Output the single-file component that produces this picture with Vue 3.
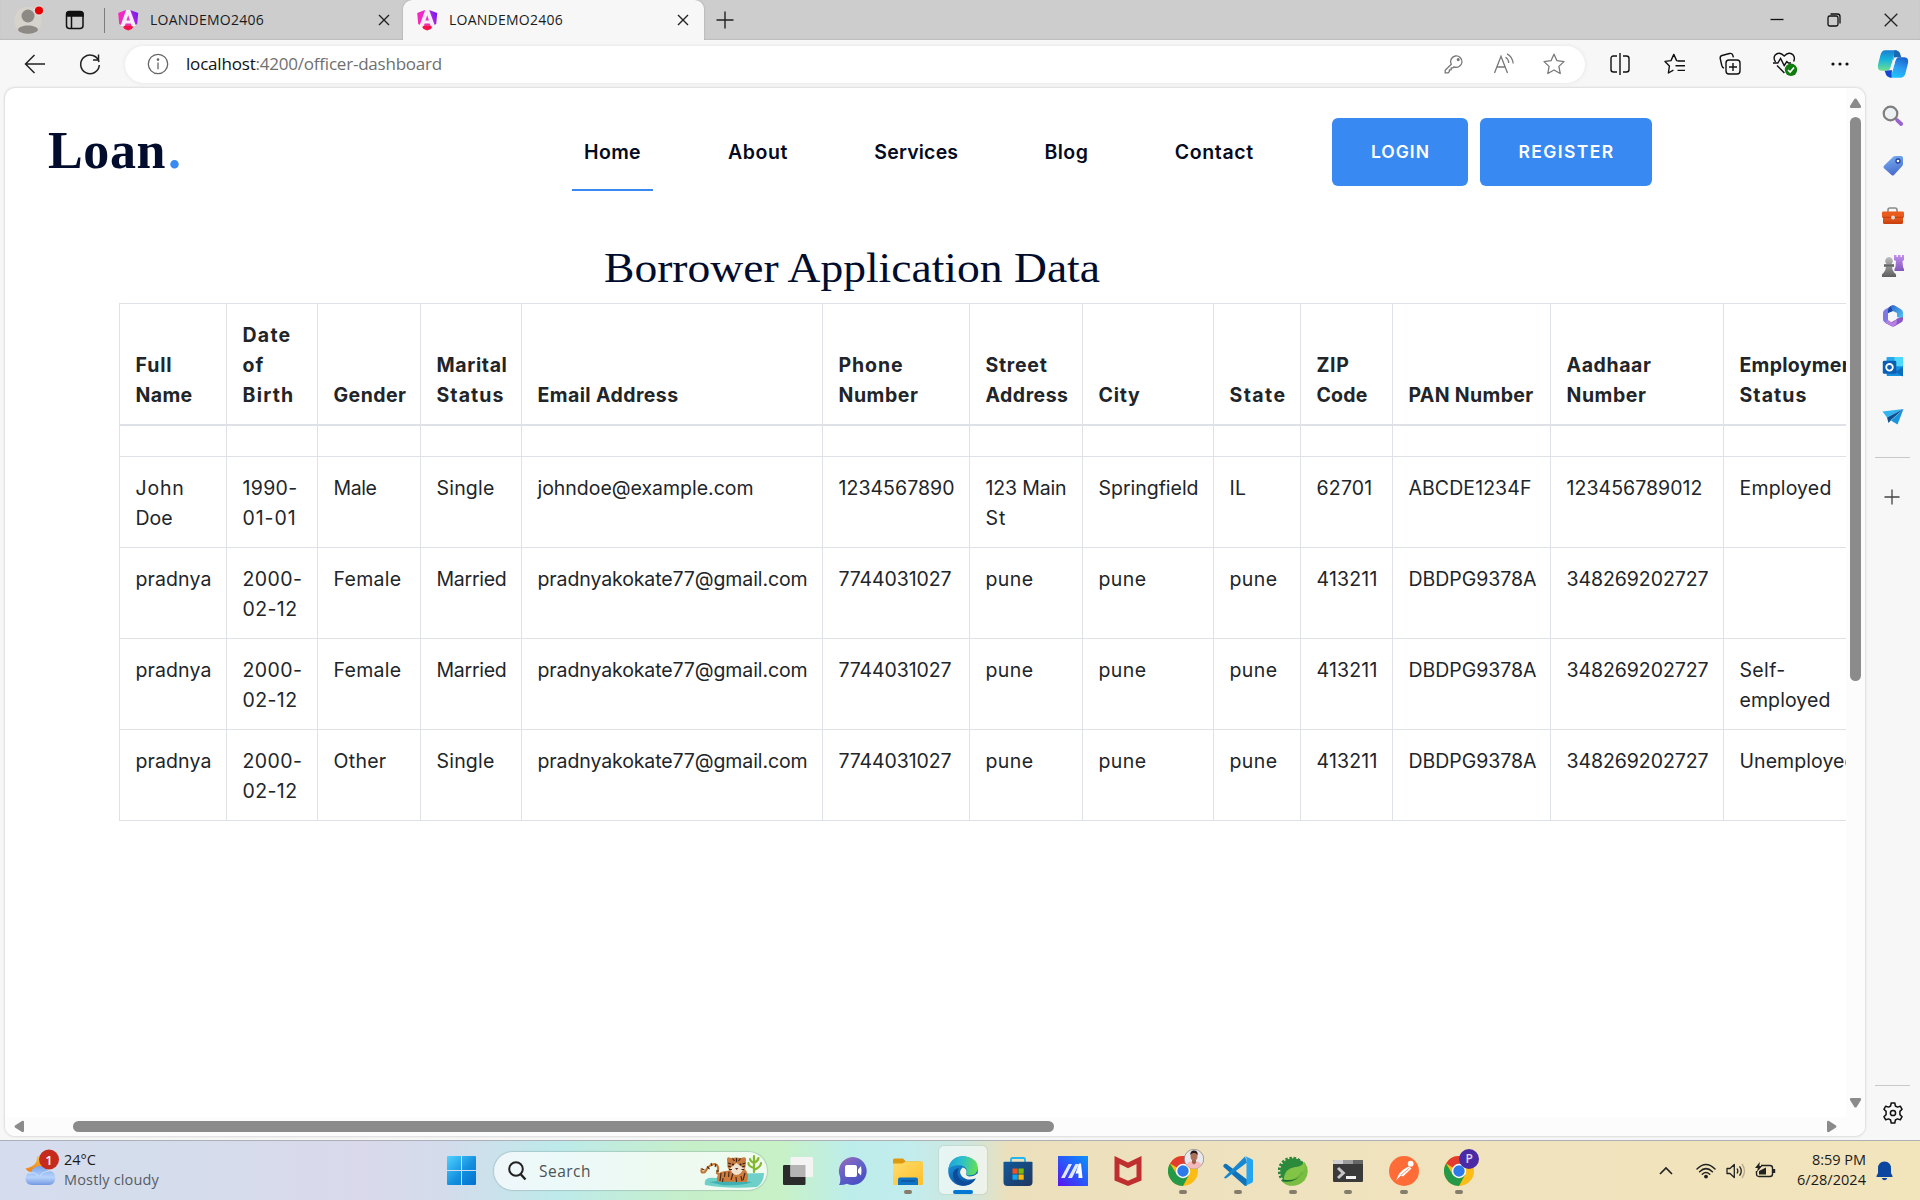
<script setup>
// Makes the text of an element take the given width: by letter spacing,
// or, with the .stretch modifier, by widening the glyphs themselves.
const vFit = {
  mounted(el, { value, modifiers }) {
    if (!value) return
    const natural = el.getBoundingClientRect().width
    if (modifiers.stretch) el.style.transform = `scaleX(${value / natural})`
    else el.style.letterSpacing = (value - natural) / el.textContent.length + 'px'
  },
}

const tabs = [
  { title: 'LOANDEMO2406', active: false },
  { title: 'LOANDEMO2406', active: true },
]

const links = [
  { label: 'Home', box: 81, text: 57, active: true },
  { label: 'About', box: 84, text: 60 },
  { label: 'Services', box: 107, text: 84 },
  { label: 'Blog', box: 67.5, text: 44 },
  { label: 'Contact', box: 102.5, text: 79 },
]

const columns = [
  { width: 107, lines: [['Full', 37], ['Name', 57]] },
  { width: 91, lines: [['Date', 49], ['of', 22], ['Birth', 52]] },
  { width: 103, lines: [['Gender', 73]] },
  { width: 101, lines: [['Marital', 71], ['Status', 68]] },
  { width: 301, lines: [['Email Address', 141]] },
  { width: 147, lines: [['Phone', 65], ['Number', 80]] },
  { width: 113, lines: [['Street', 62], ['Address', 83]] },
  { width: 131, lines: [['City', 42]] },
  { width: 87, lines: [['State', 57]] },
  { width: 92, lines: [['ZIP', 33], ['Code', 51]] },
  { width: 158, lines: [['PAN Number', 125]] },
  { width: 173, lines: [['Aadhaar', 85], ['Number', 80]] },
  { width: 153, lines: [['Employment', 122], ['Status', 68]] },
]

const person = (gender, status, employment) => [
  [['pradnya', 76]],
  [['2000-', 60], ['02-12', 55]],
  gender,
  status,
  [['pradnyakokate77@gmail.com', 270]],
  [['7744031027', 113]],
  [['pune', 48]],
  [['pune', 48]],
  [['pune', 48]],
  [['413211', 61]],
  [['DBDPG9378A', 128]],
  [['348269202727', 142]],
  employment,
]

const rows = [
  [
    [['John', 49], ['Doe', 37]],
    [['1990-', 55], ['01-01', 54]],
    [['Male', 43]],
    [['Single', 58]],
    [['johndoe@example.com', 216]],
    [['1234567890', 116]],
    [['123 Main', 81], ['St', 21]],
    [['Springfield', 100]],
    [['IL', 17]],
    [['62701', 56]],
    [['ABCDE1234F', 123]],
    [['123456789012', 136]],
    [['Employed', 92]],
  ],
  person([['Female', 68]], [['Married', 70]], []),
  person([['Female', 68]], [['Married', 70]], [['Self-', 46], ['employed', 91]]),
  person([['Other', 53]], [['Single', 58]], [['Unemployed', 117]]),
]
</script>

<template>
  <div class="screen">
    <svg width="0" height="0" class="defs">
      <defs>
        <linearGradient id="ang" x1="0" y1="0.6" x2="1" y2="0.3">
          <stop offset="0" stop-color="#f928b8" /><stop offset="0.45" stop-color="#e62bd0" /><stop offset="1" stop-color="#6d18f5" />
        </linearGradient>
        <linearGradient id="cpA" x1="0" y1="0" x2="0" y2="1">
          <stop offset="0" stop-color="#1a7fd0" /><stop offset="0.45" stop-color="#16b3dd" /><stop offset="1" stop-color="#6fe08c" />
        </linearGradient>
        <linearGradient id="cpB" x1="0.7" y1="0" x2="0.3" y2="1">
          <stop offset="0" stop-color="#1a64cf" /><stop offset="0.5" stop-color="#2b9bf0" /><stop offset="1" stop-color="#22c3fb" />
        </linearGradient>
        <linearGradient id="tag" x1="0" y1="0" x2="0.3" y2="1">
          <stop offset="0" stop-color="#7ab2f5" /><stop offset="1" stop-color="#4a6fce" />
        </linearGradient>
        <linearGradient id="box" x1="0" y1="0" x2="0" y2="1">
          <stop offset="0" stop-color="#f26a26" /><stop offset="1" stop-color="#c93c0c" />
        </linearGradient>
        <linearGradient id="rook" x1="0" y1="0" x2="0" y2="1">
          <stop offset="0" stop-color="#c38ff0" /><stop offset="1" stop-color="#8257bd" />
        </linearGradient>
        <linearGradient id="pawn" x1="0" y1="0" x2="0" y2="1">
          <stop offset="0" stop-color="#bdbdbd" /><stop offset="1" stop-color="#5f5f5f" />
        </linearGradient>
        <linearGradient id="win" x1="0" y1="0" x2="1" y2="1">
          <stop offset="0" stop-color="#4fd2ff" /><stop offset="0.55" stop-color="#1490df" /><stop offset="1" stop-color="#0070cf" />
        </linearGradient>
        <linearGradient id="cloud" x1="0" y1="0" x2="0" y2="1">
          <stop offset="0" stop-color="#7ba4ee" /><stop offset="0.6" stop-color="#b6d3fb" /><stop offset="1" stop-color="#7398e2" />
        </linearGradient>
        <linearGradient id="moon" x1="0" y1="0" x2="0" y2="1">
          <stop offset="0" stop-color="#f7c531" /><stop offset="1" stop-color="#f07b1d" />
        </linearGradient>
        <linearGradient id="chat" x1="0" y1="0" x2="0.6" y2="1">
          <stop offset="0" stop-color="#a06bb5" /><stop offset="0.5" stop-color="#6562c8" /><stop offset="1" stop-color="#4b4fc4" />
        </linearGradient>
        <linearGradient id="folder" x1="0" y1="0" x2="1" y2="1">
          <stop offset="0" stop-color="#ffdc6b" /><stop offset="1" stop-color="#fcbf2b" />
        </linearGradient>
        <linearGradient id="edgeTop" x1="0" y1="0.4" x2="1" y2="0.5">
          <stop offset="0" stop-color="#1fa2dc" /><stop offset="0.45" stop-color="#2bc1c9" /><stop offset="1" stop-color="#66e04f" />
        </linearGradient>
        <linearGradient id="edgeBody" x1="0" y1="0" x2="0.6" y2="1">
          <stop offset="0" stop-color="#1b9de2" /><stop offset="1" stop-color="#0b55a5" />
        </linearGradient>
        <linearGradient id="store" x1="0" y1="0" x2="1" y2="1">
          <stop offset="0" stop-color="#11599b" /><stop offset="1" stop-color="#21365f" />
        </linearGradient>
        <linearGradient id="asus" x1="0" y1="1" x2="1" y2="0">
          <stop offset="0" stop-color="#5b14ef" /><stop offset="0.5" stop-color="#2a56fb" /><stop offset="1" stop-color="#0a93fb" />
        </linearGradient>
        <linearGradient id="m365" x1="0" y1="0" x2="1" y2="1">
          <stop offset="0" stop-color="#2b62c9" /><stop offset="1" stop-color="#56c7f5" />
        </linearGradient>
        <g id="angular">
          <path d="M7.2 0.2 H12.8 L20.2 3 L19.2 14 L16.6 15.2 H3.8 L1.2 14 L0.2 3 Z" fill="url(#ang)" />
          <path d="M8.2 0 H12.2 L18 16 H13.6 L12.7 13.4 H7.7 L6.8 16 H2.4 Z" fill="#f4eef6" />
          <path d="M10.2 5.2 L12 10.4 H8.4 Z" fill="#e23ad2" />
          <path d="M5.2 17 L7.4 15.2 H13 L15.2 17 L13.8 19 L10.2 20.6 L6.6 19 Z" fill="#f5104f" />
        </g>
        <g id="chrome">
          <circle cx="15" cy="15" r="15" fill="#fbbc16" />
          <path d="M15 15 L2 7.5 A15 15 0 0 1 28 7.5 L15 8 Z" fill="#e33b2e" />
          <path d="M2 7.5 A15 15 0 0 0 15 30 L21.2 18.6 L15 15 L8.8 18.6 Z" fill="#249a48" />
          <circle cx="15" cy="15" r="7.2" fill="#fff" />
          <circle cx="15" cy="15" r="5.7" fill="#2d7bea" />
        </g>
      </defs>
    </svg>

    <!-- Tab strip -->
    <div class="tabstrip">
      <svg class="profile" width="32" height="32" viewBox="0 0 32 32">
        <circle cx="15" cy="17.5" r="13.7" fill="#d6d3cd" />
        <circle cx="15" cy="13" r="6.5" fill="#8d8a86" />
        <path d="M5 27 C5 21 25 21 25 27 C22 32 8 32 5 27 Z" fill="#8d8a86" />
        <circle cx="26" cy="7.5" r="4.6" fill="#e60000" stroke="#e8e8e8" stroke-width="1" />
      </svg>
      <svg class="panes" width="20" height="20" viewBox="0 0 20 20" fill="none" stroke="#111" stroke-width="1.5">
        <rect x="1.5" y="1.5" width="16.5" height="17" rx="3" />
        <path d="M2 4 Q2 2 4 2 H16 Q18 2 18 4 V6 H2 Z" fill="#111" />
        <path d="M6.5 6 V18" />
      </svg>
      <i class="sep"></i>
      <div v-for="(tab, i) in tabs" :key="i" class="tab" :class="{ active: tab.active }">
        <svg width="21" height="21" viewBox="0 0 21 21"><use href="#angular" /></svg>
        <span class="tab-title"><span v-fit="114" class="t">{{ tab.title }}</span></span>
        <svg width="12" height="12" viewBox="0 0 12 12" stroke="#222" stroke-width="1.4"><path d="M1 1 L11 11 M11 1 L1 11" /></svg>
      </div>
      <svg class="newtab" width="18" height="18" viewBox="0 0 18 18" stroke="#222" stroke-width="1.4"><path d="M9 0.5 V17.5 M0.5 9 H17.5" /></svg>
      <div class="wincontrols">
        <svg width="14" height="14" viewBox="0 0 14 14" stroke="#111" stroke-width="1.3"><path d="M0.5 6.5 H13.5" /></svg>
        <svg width="14" height="14" viewBox="0 0 14 14" fill="none" stroke="#111" stroke-width="1.3">
          <rect x="1" y="3" width="10" height="10" rx="1.8" /><path d="M3.5 1 H10.5 Q13 1 13 3.5 V10.5" />
        </svg>
        <svg width="14" height="14" viewBox="0 0 14 14" stroke="#222" stroke-width="1.3"><path d="M0.7 0.7 L13.3 13.3 M13.3 0.7 L0.7 13.3" /></svg>
      </div>
    </div>

    <!-- Toolbar -->
    <div class="toolbar">
      <svg class="back" width="22" height="20" viewBox="0 0 22 20" fill="none" stroke="#222" stroke-width="1.5"><path d="M21 10 H1.5 M10.5 1 L1.5 10 L10.5 19" /></svg>
      <svg class="reload" width="22" height="22" viewBox="0 0 22 22" fill="none" stroke="#222" stroke-width="1.5">
        <path d="M20 9 A9.3 9.3 0 1 0 20.3 12" /><path d="M19.5 1.5 V7 H14" />
      </svg>
      <div class="address">
        <svg width="22" height="22" viewBox="0 0 22 22" fill="none" stroke="#666" stroke-width="1.3">
          <circle cx="11" cy="11" r="9.7" /><path d="M11 9.5 V16.2" /><circle cx="11" cy="6.6" r="0.7" fill="#666" />
        </svg>
        <span class="url"><span v-fit="69.5" class="t host">localhost</span><span v-fit="186.5" class="t path">:4200/officer-dashboard</span></span>
        <span class="slot50">
          <svg width="20" height="20" viewBox="0 0 20 20" fill="none" stroke="#777" stroke-width="1.3">
            <path d="M7.3 10.3 A5.7 5.7 0 1 1 10 12.8 L9 13.8 H7.2 V15.8 H5.4 V17.6 L4 18.9 H1.2 V16.2 Z" stroke-linejoin="round" /><circle cx="14.2" cy="5.6" r="0.9" fill="#777" />
          </svg>
        </span>
        <span class="slot50">
          <svg width="22" height="22" viewBox="0 0 22 22" fill="none" stroke="#777" stroke-width="1.3">
            <path d="M1.5 20 L8 3.2 L14.5 20 M3.8 14 H12.2" /><path d="M12.5 4.3 Q15.5 6 15.8 10" /><path d="M14 0.8 Q19.5 3.6 20.2 10.5" />
          </svg>
        </span>
        <span class="slot50">
          <svg width="22" height="22" viewBox="0 0 22 22" fill="none" stroke="#777" stroke-width="1.3" stroke-linejoin="round">
            <path d="M11 1.2 L14 7.7 L21 8.6 L15.9 13.4 L17.2 20.5 L11 17 L4.8 20.5 L6.1 13.4 L1 8.6 L8 7.7 Z" />
          </svg>
        </span>
      </div>
      <div class="actions">
        <span>
          <svg width="20" height="22" viewBox="0 0 20 22" fill="none" stroke="#111" stroke-width="1.4">
            <path d="M7 3 H3.5 Q1 3 1 5.5 V16.5 Q1 19 3.5 19 H7 M13 3 H16.5 Q19 3 19 5.5 V16.5 Q19 19 16.5 19 H13 M10 0 V22" />
          </svg>
        </span>
        <span>
          <svg width="22" height="22" viewBox="0 0 22 22" fill="none" stroke="#111" stroke-width="1.4" stroke-linejoin="round">
            <path d="M15.2 8 L12.6 7.6 L9.8 1.4 L7 7.6 L1 8.4 L5.4 13 L4.4 20 L9.4 17.2" /><path d="M14.5 8 H21 M11.5 12.8 H21 M13.5 17.4 H21" />
          </svg>
        </span>
        <span>
          <svg width="22" height="24" viewBox="0 0 22 24" fill="none" stroke="#111" stroke-width="1.4">
            <rect x="7" y="8" width="14" height="14" rx="3" /><path d="M14 11 V19 M10 15 H18" />
            <path d="M5 16.2 Q3.4 15.6 2.8 13.5 L1.2 6.5 Q0.8 4.2 3 3.5 L10.5 1.5 Q13 1 13.8 3.2 L14.4 5.4" />
          </svg>
        </span>
        <span>
          <svg width="26" height="26" viewBox="0 0 26 26" fill="none" stroke="#111" stroke-width="1.4">
            <path d="M3.6 11 Q0.8 7 3.2 4 Q7 0 12.2 5 Q17.4 0 21.2 4 Q23.4 7 21.6 10.5" /><path d="M1 12 H5.8 L8.6 7.4 L12.2 14.5 L14.8 10.6 L16.4 12 H19" /><path d="M5 14.5 L12.4 22" />
            <circle cx="19" cy="18.8" r="6.2" fill="#107c10" stroke="none" /><path d="M16 19 L18.2 21 L22 16.6" stroke="#fff" stroke-width="1.6" />
          </svg>
        </span>
        <span>
          <svg width="18" height="4" viewBox="0 0 18 4" fill="#111"><circle cx="2" cy="2" r="1.6" /><circle cx="9" cy="2" r="1.6" /><circle cx="16" cy="2" r="1.6" /></svg>
        </span>
        <span class="copilot">
          <svg width="32" height="28" viewBox="0 0 32 28">
            <path d="M8 0.3 H20 Q17.8 2 16.8 5.6 L13.6 17.4 Q12.6 20.8 9.4 20.8 H4.6 Q0 20.6 1 14.8 L3.6 4.4 Q4.8 0.6 8 0.3 Z" fill="url(#cpA)" />
            <path d="M17.5 0.3 Q22.4 0.3 23.4 4.4 L24.3 7.4 H20.6 Q17.6 7.6 16.6 10.2 L15.6 13 L17 5 Z" fill="#1966b5" />
            <path d="M24 27.7 H12 Q14.2 26 15.2 22.4 L18.4 10.6 Q19.4 7.2 22.6 7.2 H27.4 Q32 7.4 31 13.2 L28.4 23.6 Q27.2 27.4 24 27.7 Z" fill="url(#cpB)" />
            <path d="M14.5 27.7 Q9.6 27.7 8.6 23.6 L7.7 20.8 H10 Q13 20.4 14 17.8 L16 12 L14.6 24 Z" fill="#1546cf" />
            <path d="M17.2 7.6 Q19 7.2 20.6 7.3 Q19 8.2 18.4 10.4 L15.6 20.2 H11.2 Q13 19.4 13.6 17.4 Z" fill="#f7f7f7" />
          </svg>
        </span>
      </div>
    </div>

    <!-- Page and side bar -->
    <div class="middle">
      <div class="frame">
        <div class="page">
          <header>
            <div class="logo"><span v-fit="118" class="t">Loan</span><b v-fit="16" class="t">.</b></div>
            <nav>
              <a v-for="l in links" :key="l.label" :class="{ active: l.active }" :style="{ width: l.box + 'px' }"><span v-fit="l.text" class="t">{{ l.label }}</span></a>
            </nav>
            <button class="login"><span v-fit="59" class="t">LOGIN</span></button>
            <button class="register"><span v-fit="96" class="t">REGISTER</span></button>
          </header>
          <h2><span v-fit.stretch="496" class="t">Borrower Application Data</span></h2>
          <table>
            <colgroup><col v-for="(c, i) in columns" :key="i" :style="{ width: c.width + 'px' }" /></colgroup>
            <thead>
              <tr>
                <th v-for="(c, i) in columns" :key="i"><span v-for="l in c.lines" :key="l[0]" v-fit="l[1]" class="line">{{ l[0] }}</span></th>
              </tr>
            </thead>
            <tbody>
              <tr class="blank"><td v-for="(c, i) in columns" :key="i"></td></tr>
              <tr v-for="(r, i) in rows" :key="i">
                <td v-for="(cell, j) in r" :key="j"><span v-for="l in cell" :key="l[0]" v-fit="l[1]" class="line">{{ l[0] }}</span></td>
              </tr>
            </tbody>
          </table>
        </div>
        <div class="vbar">
          <svg width="13" height="11" viewBox="0 0 13 11" fill="#8b8b8b"><path d="M5.4 1 Q6.5 0 7.6 1 L12 8 Q12.6 10 11 10 H2 Q0.4 10 1 8 Z" /></svg>
          <i class="vthumb"></i>
          <svg class="down" width="13" height="11" viewBox="0 0 13 11" fill="#8b8b8b"><path d="M5.4 10 Q6.5 11 7.6 10 L12 3 Q12.6 1 11 1 H2 Q0.4 1 1 3 Z" /></svg>
        </div>
        <div class="hbar">
          <svg width="11" height="13" viewBox="0 0 11 13" fill="#8b8b8b"><path d="M1 5.4 Q0 6.5 1 7.6 L8 12 Q10 12.6 10 11 V2 Q10 0.4 8 1 Z" /></svg>
          <i class="hthumb"></i>
          <svg class="right" width="11" height="13" viewBox="0 0 11 13" fill="#8b8b8b"><path d="M10 5.4 Q11 6.5 10 7.6 L3 12 Q1 12.6 1 11 V2 Q1 0.4 3 1 Z" /></svg>
        </div>
        <div class="corner"></div>
      </div>
      <aside>
        <span>
          <svg width="22" height="22" viewBox="0 0 22 22" fill="none"><circle cx="8.5" cy="8.5" r="6.8" fill="#eef1f3" stroke="#7f7f7f" stroke-width="2.2" /><path d="M13.6 13.6 L15 15" stroke="#777" stroke-width="2" /><path d="M15.3 15.3 L19.2 19" stroke="#9a63cf" stroke-width="3.8" stroke-linecap="round" /></svg>
        </span>
        <span>
          <svg width="22" height="22" viewBox="0 0 22 22"><path d="M11.5 1.5 Q12.3 1 13.3 1 H19 Q21 1 21 3 V9 Q21 10.2 20.2 11 L12 20 Q10.8 21.2 9.5 20 L2 13.3 Q0.8 12 2 10.8 Z" fill="url(#tag)" /><circle cx="16" cy="6" r="2" fill="#fff" stroke="#25419a" stroke-width="1.3" /></svg>
        </span>
        <span>
          <svg width="24" height="20" viewBox="0 0 24 20"><path d="M7 6 V4 Q7 2 9 2 H14 Q16 2 16 4 V6" fill="none" stroke="#8a8a8a" stroke-width="1.6" /><rect x="2" y="9" width="20" height="9" rx="1.5" fill="url(#box)" /><rect x="1" y="5.5" width="22" height="6" rx="1.2" fill="#ea5c1b" /><path d="M1.5 11.3 H22.5" stroke="#b83708" stroke-width="0.9" /><circle cx="12" cy="11.5" r="2" fill="#ddd" /></svg>
        </span>
        <span>
          <svg width="24" height="24" viewBox="0 0 24 24"><path d="M13 1 H15.5 V3 H17 V1 H19.5 V3 H21 V1 H23 V6 L21.5 7 L22 13 L23 15 V17 H13.5 V15 L14.5 13 L15 7 L13 6 Z" fill="url(#rook)" /><path d="M8 3 A4 4 0 0 1 10.5 10 H13 V13 H11 Q11 16 13.5 19 Q15.5 19.5 15 23 H1 Q0.5 19.5 2.5 19 Q5 16 5 13 H3 V10 H5.5 A4 4 0 0 1 8 3 Z" fill="url(#pawn)" /><path d="M3 11.5 H13" stroke="#666" stroke-width="2" /></svg>
        </span>
        <span>
          <svg width="22" height="24" viewBox="0 0 22 24"><path d="M10 1.5 L3 5.5 Q1 6.8 1 9 V15.5 Q1 17.5 3 18.5 L6 20 V10 Q6 8 8 7 L14 3.5 Q12 0.5 10 1.5 Z" fill="#7d78e4" /><path d="M8 2.6 Q11 0.4 13.5 2 L19 5.2 Q21 6.5 21 8.5 V15 L15 13 V9 L10.8 7 L6 9 Q5.5 5 8 2.6 Z" fill="url(#m365)" /><path d="M6 9 Q5.2 5 8.6 2.3 L10.8 7 Z" fill="#1d4bab" /><path d="M21 13 V15.5 Q21 17.5 19 18.6 L13 22 Q11 23.2 9 22 L3 18.7 L10 18 L15 14.5 Z" fill="#8a55c4" /><path d="M3 18.7 L6 16 L10.5 18.8 L15 15 L14.5 20 L11 22.8 Z" fill="#b781e4" /><circle cx="11" cy="12.5" r="4" fill="#f5f7fb" /></svg>
        </span>
        <span>
          <svg width="22" height="22" viewBox="0 0 22 22"><rect x="4.5" y="1" width="16.5" height="19" rx="1" fill="#28a8ea" /><path d="M12.5 1 H21 V10 H12.5 Z" fill="#50d9ff" /><path d="M5 12 L21 10.5 V20 H5 Z" fill="#1490df" /><path d="M21 11 L13 16 L21 20.5 Z" fill="#0f6cbd" /><rect x="0.8" y="4.8" width="13.5" height="13" rx="1.4" fill="#0a5fb4" /><circle cx="7.5" cy="11.3" r="3.3" fill="none" stroke="#fff" stroke-width="1.8" /></svg>
        </span>
        <span>
          <svg width="22" height="18" viewBox="0 0 22 18"><path d="M0.5 3.5 L21.5 1 L5 9.5 Z" fill="#31b4ef" /><path d="M21.5 1 L15.5 16.5 L9 12.5 Z" fill="#1795dd" /><path d="M21.5 1 L5 9.5 L6.5 15 L9.5 11.5 Z" fill="#0d4f91" /></svg>
        </span>
        <i class="rule"></i>
        <svg class="add" width="16" height="16" viewBox="0 0 16 16" stroke="#444" stroke-width="1.3"><path d="M8 0.5 V15.5 M0.5 8 H15.5" /></svg>
        <i class="rule low"></i>
        <svg class="gear" width="22" height="22" viewBox="0 0 22 22" fill="none" stroke="#111" stroke-width="1.5" stroke-linejoin="round">
          <path d="M9.2 1 H12.8 L13.4 4 L15.4 5.1 L18.3 4.2 L20.1 7.3 L17.9 9.4 V12.6 L20.1 14.7 L18.3 17.8 L15.4 16.9 L13.4 18 L12.8 21 H9.2 L8.6 18 L6.6 16.9 L3.7 17.8 L1.9 14.7 L4.1 12.6 V9.4 L1.9 7.3 L3.7 4.2 L6.6 5.1 L8.6 4 Z" /><circle cx="11" cy="11" r="2.6" />
        </svg>
      </aside>
    </div>

    <!-- Taskbar -->
    <div class="taskbar">
      <svg class="weather" width="36" height="38" viewBox="0 0 36 38">
        <path d="M12 7 Q13 17 0.5 19.5 Q4 25 12 22 Q18 18 17 10 Z" fill="url(#moon)" />
        <path d="M7 36 Q0.5 35.5 0.5 29.5 Q1 24 6 23.5 Q8 17 15 17 Q21 17 23 22 Q30 21.5 30.3 29 Q30 35.5 24 36 Z" fill="url(#cloud)" />
        <path d="M4 24.5 Q10 22 13 27 M15 27 Q17 22.5 23.5 22.5" fill="none" stroke="#d5e5ff" stroke-width="1" opacity="0.8" />
        <circle cx="24" cy="10.5" r="10" fill="#c42b1c" />
        <text x="24" y="15.6" text-anchor="middle" class="badge">1</text>
      </svg>
      <div class="forecast"><span v-fit="32" class="t temp">24°C</span><span v-fit="95" class="t sky">Mostly cloudy</span></div>
      <svg class="start" width="29" height="29" viewBox="0 0 29 29" fill="url(#win)">
        <path d="M1 0 H14 V14 H0 V1 Q0 0 1 0 Z M15 0 H28 Q29 0 29 1 V14 H15 Z M0 15 H14 V29 H1 Q0 29 0 28 Z M15 15 H29 V28 Q29 29 28 29 H15 Z" />
      </svg>
      <div class="search">
        <svg width="20" height="20" viewBox="0 0 20 20" fill="none" stroke="#222" stroke-width="2"><circle cx="9" cy="8" r="6.8" /><path d="M13.5 13 L18.5 18.5" stroke-width="2.4" /></svg>
        <span v-fit="52" class="t">Search</span>
        <svg class="tiger" width="64" height="34" viewBox="0 0 64 34">
          <path d="M5 31 Q3 22 16 24 L24 20 L64 19 Q64 28 57 33 Q28 35 5 31 Z" fill="#6fd0c9" />
          <path d="M9 28 Q28 25 52 28 Q42 32 22 31 Z" fill="#3fb0b2" />
          <path d="M2 14 Q0 20 5 18 Q9 10 15 10 Q20 12 17 19 L21 22" fill="none" stroke="#c57635" stroke-width="2.2" />
          <path d="M2 15 L4.5 16 M7 12.5 L9.5 15 M11 9 L12 12 M16 10 L15 13 M16 17 L19 17" stroke="#4b2b1b" stroke-width="1.1" />
          <path d="M17 27.5 Q16 17 26 17 L44 14 Q50 20 47 28 Z" fill="#ce7d3c" />
          <path d="M21 19 L20 27 M25 18 L24.5 23 M29 17.5 L28.5 23 M33 19 L31 26 M45 19 L43 26 M41 22 L42 27 M23 24 L22.5 28 M36 23 L36.5 28" stroke="#4b2b1b" stroke-width="1.2" />
          <path d="M27 5 Q27 2 31 4 Q36 3 41 4 Q46 2 46 5 L45.5 13 Q42 20 36.5 20 Q30 20 27.5 13 Z" fill="#c97a3c" />
          <path d="M30 14 Q33 12 36.5 9 Q40 12 44 14 Q41 21 36.5 21 Q32 21 30 14 Z" fill="#efe2cf" />
          <path d="M36.5 4 V8 M32.5 4.5 L34.5 7 M40.5 4.5 L38.5 7 M28 9 L31 10 M45.5 9 L42.5 10 M28 12 L31 13 M45 12 L42 13 M29 15.5 L32 15.5 M44 15.5 L41.5 15.5" stroke="#3d2418" stroke-width="1.2" />
          <circle cx="33" cy="10.5" r="1" fill="#222" /><circle cx="40.5" cy="10.5" r="1" fill="#222" /><path d="M35 14 H38.4 L36.7 16 Z" fill="#6b3128" />
          <path d="M54 18 V2 M54 14 Q48 12 48.5 9 M54 16 Q61 13 61 9 M54 9 Q50 7 50 5 M54 9 Q58 7 58.5 4" fill="none" stroke="#83b82e" stroke-width="2.2" stroke-linecap="round" />
        </svg>
      </div>
      <div class="apps">
        <span>
          <svg width="30" height="28" viewBox="0 0 30 28"><rect x="0" y="8" width="22.5" height="20" rx="1.2" fill="#2b2b2b" /><rect x="7.5" y="0" width="22.5" height="20" rx="1.2" fill="#f4f4f4" /><rect x="7.5" y="8" width="15" height="12" fill="#b4b4b4" /></svg>
        </span>
        <span>
          <svg width="30" height="30" viewBox="0 0 30 30"><path d="M15 1 A14 14 0 1 1 9 27.8 Q5 29.4 1 29 Q3 26 2 20.5 A14 14 0 0 1 15 1 Z" fill="url(#chat)" /><rect x="7" y="9" width="12" height="12" rx="2" fill="#fff" /><path d="M20 13.5 L23 10 Q24 14.8 23 19.5 L20 16.5 Z" fill="#fff" /></svg>
        </span>
        <span class="running">
          <svg width="30" height="28" viewBox="0 0 30 28"><path d="M0 3 Q0 1.5 1.5 1.5 H10 L13 4.5 H28 V10 H0 Z" fill="#dd9a0e" /><path d="M0 6.5 H9.5 L12.5 4.5 H29 Q30 4.5 30 5.5 V27 Q30 28 29 28 H1 Q0 28 0 27 Z" fill="url(#folder)" /><path d="M5 28 V22.5 Q5 20.5 7 20.5 H23 Q25 20.5 25 22.5 V28 Z" fill="#0d72c4" /><path d="M8 24 H22" stroke="#0a4d91" stroke-width="1.2" /></svg>
        </span>
        <span class="current">
          <svg width="30" height="30" viewBox="0 0 30 30">
            <circle cx="15" cy="15" r="14.8" fill="url(#edgeBody)" />
            <path d="M0.4 13 Q2.5 0.2 15 0.2 Q29.4 1.2 29.8 12 Q29.4 19.5 21 19.6 Q17.3 19.2 18.4 17 Q19.8 11.6 14 9.6 Q5.5 8.2 0.4 13 Z" fill="url(#edgeTop)" />
            <path d="M11 12 Q7.6 18 11.8 23 Q18 29 27.5 23 Q23 29.8 15.3 29.8 Q5 28.5 4.8 18.5 Q5.6 12.8 11 12 Z" fill="#0d4c98" />
            <path d="M14.6 11.6 Q18.8 12.6 18.4 16.6 Q16.8 19.6 21 20.6 Q26.5 20.5 29 17.6 Q30.5 17.4 30 20 Q29 22.4 27.6 22.6 Q19 25.4 14 20.5 Q9.8 16 14.6 11.6 Z" fill="#f2f2ea" />
          </svg>
        </span>
        <span>
          <svg width="30" height="30" viewBox="0 0 30 30"><path d="M8 7 V3.5 Q8 2 9.5 2 H20.5 Q22 2 22 3.5 V7" fill="none" stroke="#20b6ef" stroke-width="1.8" /><path d="M0.5 6.5 Q0.5 5.8 1.5 5.8 H28.5 Q29.5 5.8 29.5 6.5 V26 Q29.5 30 25.5 30 H4.5 Q0.5 30 0.5 26 Z" fill="url(#store)" /><rect x="9.5" y="12.5" width="5.2" height="5.2" fill="#f25022" /><rect x="15.5" y="12.5" width="5.2" height="5.2" fill="#7fba00" /><rect x="9.5" y="18.5" width="5.2" height="5.2" fill="#12a5ef" /><rect x="15.5" y="18.5" width="5.2" height="5.2" fill="#ffb900" /></svg>
        </span>
        <span>
          <svg width="30" height="30" viewBox="0 0 30 30"><rect width="30" height="30" fill="url(#asus)" /><path d="M3 22 L10.5 8 H14 L6.8 22 Z M10 22 L17.5 8 H21 L14 22 Z" fill="#dfe9ff" /><path d="M21 7.5 H23 L24.5 22 H20.5 V17.5 H17.5 Z" fill="#fff" /></svg>
        </span>
        <span>
          <svg width="28" height="30" viewBox="0 0 28 30"><path d="M0.5 0 L14 6.5 L27.5 0 V24.5 L14 30 L0.5 24.5 Z M5.5 8 V21 L14 24.7 L22.5 21 V8 L14 12.2 Z" fill="#bf2f2f" fill-rule="evenodd" /></svg>
        </span>
        <span class="running">
          <svg width="30" height="30" viewBox="0 0 30 30"><use href="#chrome" /></svg>
          <svg class="avatar" width="20" height="20" viewBox="0 0 20 20"><circle cx="10" cy="10" r="9.7" fill="#e8e8ee" stroke="#8e8a86" stroke-width="0.8" /><path d="M2.5 16 Q4 12 10 12 Q16 12 17.5 16 Q14 19.8 10 19.6 Q6 19.8 2.5 16 Z" fill="#f3b9bd" /><path d="M8 9 H12 V14 L10 15.5 L8 14 Z" fill="#9a634a" /><ellipse cx="10" cy="7" rx="3.5" ry="4.6" fill="#ab7257" /><path d="M6.3 6 Q6 1.5 10 1.5 Q14 1.5 13.7 6 Q12 3.6 10 4 Q8 3.6 6.3 6 Z" fill="#241a18" /></svg>
        </span>
        <span class="running">
          <svg width="30" height="30" viewBox="0 0 30 30"><path d="M1 8.5 Q2 7.2 3.6 8 L24 23.5 V29.5 L22 30 L0.6 11 Q-0.2 9.7 1 8.5 Z" fill="#1272b8" /><path d="M1 21.5 L22 0.6 L24 6.5 L3.6 22 Q2.2 23 1 21.5 Z" fill="#1688d2" /><path d="M22 0 L29 3.2 Q30 3.8 30 5 V25 Q30 26.2 29 26.8 L22 30 Q23.5 29 23.5 27.5 V2.5 Q23.5 1 22 0 Z" fill="#25a4f0" /></svg>
        </span>
        <span class="running">
          <svg width="30" height="30" viewBox="0 0 30 30"><circle cx="14" cy="15" r="12.8" fill="none" stroke="#28853c" stroke-width="3" stroke-dasharray="2.4 1.7" /><circle cx="15" cy="15" r="12.8" fill="#2c8a3c" /><path d="M26.5 6 Q33 15 26.5 24.5 Q19 32 9 29 L5 26.5 Q7 12 18 11 Q25 10.5 26.5 6 Z" fill="#79bd42" /><path d="M5 24.5 Q17 27 24.5 15.5" fill="none" stroke="#1d6b30" stroke-width="1.8" /><path d="M6 23.5 Q6 12.5 16 11.5 Q23 11 26.5 6 Q28 18 18.5 22.5 Q12 25 6 23.5 Z" fill="#82c547" opacity="0.85" /></svg>
        </span>
        <span class="running">
          <svg width="30" height="22" viewBox="0 0 30 22"><rect width="30" height="22" rx="1.2" fill="#3a3a3a" /><path d="M0 4 V1 Q0 0 1 0 H10 V4 Z" fill="#cfcfcf" /><rect x="10" width="10" height="4" fill="#9c9c9c" /><path d="M20 0 H29 Q30 0 30 1 V4 H20 Z" fill="#666" /><path d="M5 8 L10.3 13 L5 18" fill="none" stroke="#c6c6c6" stroke-width="3" /><rect x="13" y="16" width="10" height="3" fill="#f2f2f2" /></svg>
        </span>
        <span class="running">
          <svg width="30" height="30" viewBox="0 0 30 30"><circle cx="15" cy="15" r="15" fill="#ff6c37" /><circle cx="21.7" cy="7.7" r="2.9" fill="#fff" /><path d="M20 10.5 L22.5 12.5 L14 20.5 L12 19.5 L7 24.5 L10 18 Q14 12.5 20 10.5 Z" fill="#fff" /><path d="M12 19 L20.5 12" stroke="#ff6c37" stroke-width="0.7" /></svg>
        </span>
        <span class="running">
          <svg width="30" height="30" viewBox="0 0 30 30"><use href="#chrome" /></svg>
          <i class="initial">P</i>
        </span>
      </div>
      <div class="tray">
        <svg class="chev" width="14" height="9" viewBox="0 0 14 9" fill="none" stroke="#222" stroke-width="1.6"><path d="M1 8 L7 2 L13 8" /></svg>
        <svg class="wifi" width="20" height="16" viewBox="0 0 20 16" fill="none" stroke="#222" stroke-width="1.5" stroke-linecap="round"><path d="M1 6 Q10 -3 19 6 M3.6 8.7 Q10 2.5 16.4 8.7 M6.3 11.2 Q10 7.8 13.7 11.2" /><circle cx="10" cy="13.6" r="1.2" fill="#222" /></svg>
        <svg class="vol" width="20" height="16" viewBox="0 0 20 16" fill="none" stroke="#222" stroke-width="1.3"><path d="M1 5.5 H4 L8.3 1.5 V14.5 L4 10.5 H1 Z" stroke-linejoin="round" /><path d="M11 5.5 Q12.7 8 11 10.5 M13.5 3.3 Q17 8 13.5 12.7" /><path d="M16 1 Q21 8 16 15" stroke="#b7ab8e" /></svg>
        <svg class="bat" width="21" height="16" viewBox="0 0 21 16" fill="none" stroke="#222" stroke-width="1.4"><path d="M6 3.5 H15 Q17.5 3.5 17.5 6 V12 Q17.5 14.5 15 14.5 H4 Q1.5 14.5 1.5 12 V9" /><path d="M18.8 7 V11" stroke-width="2.8" /><path d="M4 12.5 V9 L11 5.5 V12.5 Z" fill="#222" stroke="none" /><path d="M4.8 0 L0 6 H2.8 L2 10 L7.2 4 H4.4 Z" fill="#222" stroke="none" /></svg>
        <div class="clock"><span v-fit="54" class="t">8:59 PM</span><span v-fit="69" class="t">6/28/2024</span></div>
        <svg class="bell" width="17" height="20" viewBox="0 0 17 20" fill="#0b479e"><path d="M8.5 0.5 Q15 0.8 15 7.5 V12 L16.5 15 V16 H0.5 V15 L2 12 V7.5 Q2 0.8 8.5 0.5 Z" /><path d="M5.8 17 H11.2 Q10.5 19.3 8.5 19.3 Q6.5 19.3 5.8 17 Z" /></svg>
      </div>
    </div>
  </div>
</template>

<style>
body { background: #f7f7f7; }
</style>

<style scoped>
* { box-sizing: border-box; }
svg { display: block; flex: none; }
.screen {
  width: 1920px; height: 1200px; overflow: hidden;
  display: flex; flex-direction: column;
  background: #f7f7f7; font-family: "Open Sans", "Noto Sans", sans-serif; color: #1b1b1b;
}
.defs { position: absolute; }
.t { display: inline-block; white-space: nowrap; transform-origin: 0 50%; }

.tabstrip { height: 40px; flex: none; display: flex; align-items: center; background: #cdcdcd; box-shadow: inset 0 -1px 1px #bdbdbd; }
.profile { margin: 0 0 2px 13px; }
.panes { margin-left: 20px; }
.sep { width: 1px; height: 25px; margin-left: 19px; background: #7d7d7d; }
.tab { width: 298px; height: 40px; padding: 0 13px; display: flex; align-items: center; }
.tab.active { background: #f7f7f7; border-radius: 9px 9px 0 0; padding-left: 14px; width: 301px; padding-right: 15px; box-shadow: 0 0 2px #999; clip-path: inset(0 -3px 0 -3px); }
.tab-title { flex: 1; margin-left: 11px; font-size: 14px; line-height: 20px; }
.newtab { margin-left: 12px; }
.wincontrols { margin-left: auto; display: flex; gap: 43px; padding-right: 22px; }

.toolbar { height: 48px; flex: none; display: flex; align-items: center; }
.back { margin-left: 24px; }
.reload { margin-left: 33px; }
.address {
  width: 1460px; height: 37px; margin-left: 24px; padding: 0 6px 0 22px; border-radius: 19px;
  background: #fff; box-shadow: 0 0 4px #e2e2e2; display: flex; align-items: center;
}
.url { flex: 1; margin-left: 17px; padding-bottom: 2px; font-size: 17px; white-space: nowrap; }
.host { color: #111; }
.path { color: #6f6f6f; }
.slot50 { width: 50px; display: flex; justify-content: center; }
.actions { display: flex; align-items: center; margin-left: 7px; }
.actions span { width: 55.2px; display: flex; justify-content: center; }
.actions .copilot { width: 50px; }

.middle { height: 1052px; flex: none; display: flex; }
.frame {
  width: 1860px; height: 1048px; margin-left: 5px; overflow: hidden; flex: none;
  display: grid; grid-template: 1029px 19px / 1841px 19px;
  background: #fff; border-radius: 10px; box-shadow: 0 0 2px 1px #dcdcdc;
}
.page { overflow: hidden; font-family: Inter, "Open Sans", sans-serif; }
header { height: 128px; display: flex; align-items: center; padding-left: 43px; }
.logo { width: 524px; padding-bottom: 3px; font: 700 52px/60px "Liberation Serif", serif; color: #020d2e; white-space: nowrap; }
.logo b { margin-left: 2px; color: #3889f2; }
nav { display: flex; gap: 62.9px; }
nav a {
  height: 78px; display: flex; align-items: center; justify-content: center;
  border-bottom: 2px solid transparent; border-top: 2px solid transparent;
  font-size: 19.5px; font-weight: 600; color: #050a20;
}
nav a.active { border-bottom-color: #3889f2; }
button {
  height: 68px; border: 0; border-radius: 6px; background: #3889f2; color: #fff; padding: 0 0 0 1px;
  font: 600 17.5px/20px Inter, sans-serif;
}
.login { width: 136px; margin-left: 66.4px; }
.register { width: 172px; margin-left: 12px; }
h2 { margin: 0; height: 87px; padding: 28px 0 0 599px; font: 400 42px/48px "Liberation Serif", serif; color: #020d2e; }
table {
  width: 1757px; margin-left: 114px; table-layout: fixed; border-spacing: 0;
  border-top: 1px solid #dee2e6; border-left: 1px solid #dee2e6;
  font-size: 19.5px; line-height: 30px; color: #212529;
}
th, td { padding: 16px 0 14px 15.5px; text-align: left; vertical-align: top; border: 0 solid #dee2e6; border-width: 0 1px 1px 0; height: 91px; }
th { vertical-align: bottom; font-weight: 700; border-bottom-width: 2px; height: 122px; }
.blank td { padding: 0; height: 31px; }
.line { display: block; width: fit-content; white-space: nowrap; }

.vbar { background: #fcfcfc; display: flex; flex-direction: column; align-items: center; padding-top: 10px; }
.vthumb { width: 11px; height: 564px; margin-top: 8px; border-radius: 6px; background: #8b8b8b; }
.down { margin-top: 416px; }
.hbar { background: #fcfcfc; display: flex; align-items: center; padding-left: 9px; }
.hthumb { width: 981px; height: 11px; margin-left: 48px; border-radius: 6px; background: #8b8b8b; }
.right { margin-left: 772px; }
.corner { background: #fcfcfc; }

aside { flex: 1; display: flex; flex-direction: column; align-items: center; padding-top: 3px; }
aside > span { height: 50.1px; width: 55px; display: flex; align-items: center; justify-content: center; }
.rule { width: 35px; height: 1px; margin-top: 15px; background: #c8c8c8; }
.add { margin: 31px 2px 0 0; }
.rule.low { margin-top: 580px; }
.gear { margin-top: 16px; }

.taskbar {
  position: relative; height: 60px; flex: none; display: flex; align-items: center; border-top: 1px solid #aab0b6;
  background: linear-gradient(90deg, #d5dcee 0, #d4ddec 150px, #d9d9eb 360px, #d3dcec 450px, #bdeaea 560px, #c6efc9 690px, #c8f1c6 780px, #bdedeb 850px, #c2eced 910px, #cfe6dc 970px, #ecdfbb 1010px, #efe2be 1300px, #f2e4bb 1920px);
}
.weather { margin: 0 0 5px 25px; }
.badge { font: 600 13px "Open Sans", sans-serif; fill: #fff; }
.forecast { width: 386px; margin-left: 3px; padding-bottom: 2px; display: flex; flex-direction: column; align-items: flex-start; font-size: 14.5px; line-height: 20px; }
.sky { color: #565c66; }
.start { margin-left: -3px; }
.search {
  width: 273px; height: 38px; margin-left: 18px; padding-left: 13px; border-radius: 19px;
  background: rgba(255, 255, 255, .7); box-shadow: 0 0 1px 1px rgba(120, 150, 150, .35);
  display: flex; align-items: center; font-size: 15.5px; color: #4c5354;
}
.search .t { margin-left: 12px; }
.tiger { margin-left: auto; margin-right: 3px; }
.apps { display: flex; margin-left: 3px; height: 59px; align-items: center; }
.apps > span { position: relative; width: 55.1px; height: 59px; display: flex; align-items: center; justify-content: center; }
.running::after, .current::after { content: ""; position: absolute; bottom: 6px; width: 8px; height: 4px; border-radius: 2px; background: #857d6b; }
.current::before { content: ""; position: absolute; left: 3.5px; top: 5px; width: 48px; height: 48px; border-radius: 5px; background: rgba(255, 255, 255, .55); box-shadow: 0 0 1px 1px rgba(150, 150, 130, .15); }
.current::after { width: 20px; background: #0078d4; }
.current svg { position: relative; }
.avatar { position: absolute; left: 28px; top: 8px; }
.initial { position: absolute; left: 28px; top: 8px; width: 20px; height: 20px; border-radius: 50%; background: #4b2aa5; color: #e3daf7; font: 600 12px/20px "Open Sans", sans-serif; text-align: center; }
.tray { display: flex; align-items: center; margin-left: auto; padding-right: 27px; }
.wifi { margin-left: 23px; }
.vol { margin-left: 10px; }
.bat { margin: 0 0 2px 9px; }
.clock { width: 90px; padding-bottom: 2px; display: flex; flex-direction: column; align-items: flex-end; font-size: 14.5px; line-height: 20px; }
.bell { margin-left: 10px; }
</style>
